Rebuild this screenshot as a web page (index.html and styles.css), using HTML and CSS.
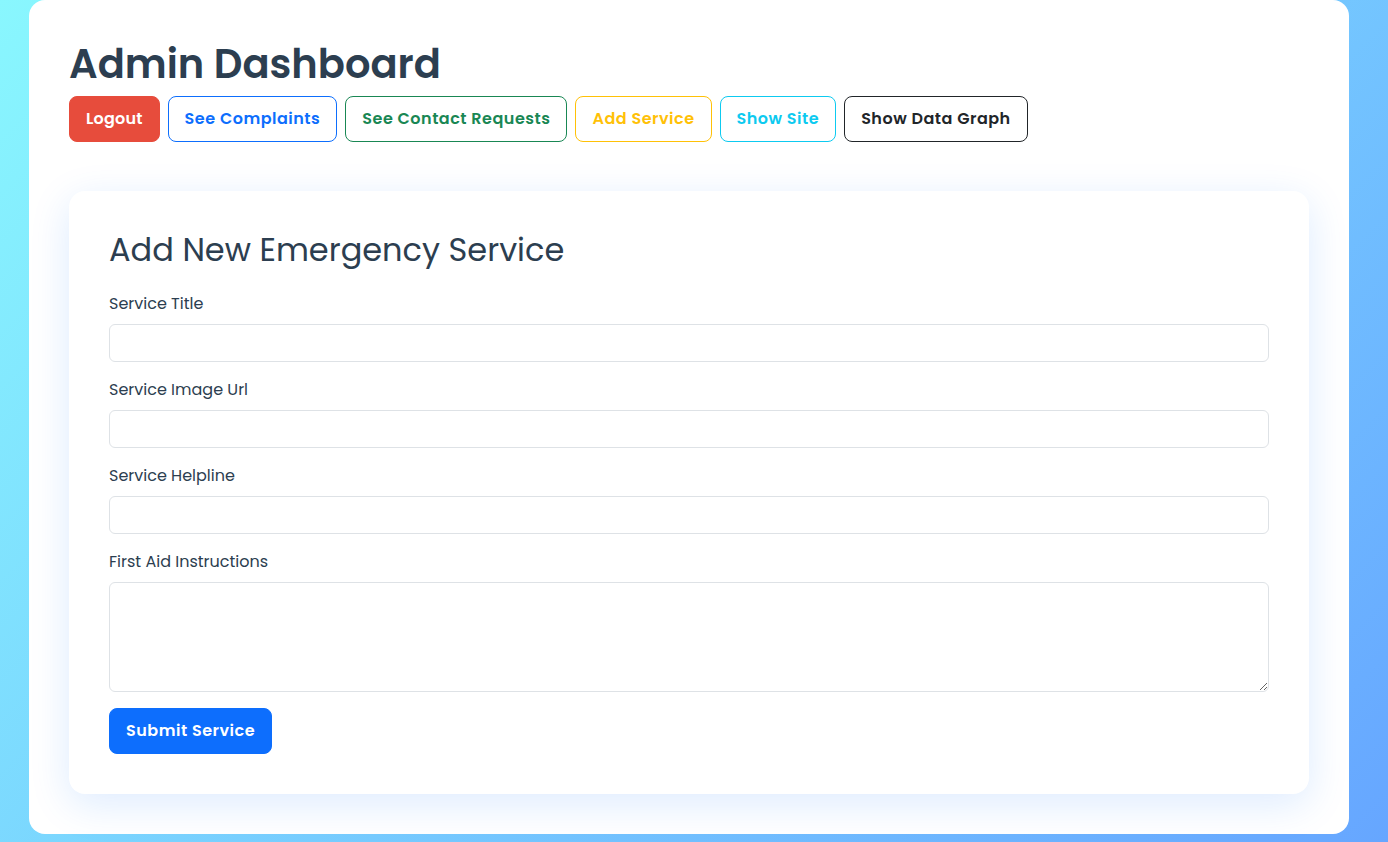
FILE: index.html
```html
<!DOCTYPE html>
<html lang="en">
<head>
<meta charset="utf-8">
<title>Admin Dashboard</title>
<link rel="stylesheet" href="styles.css">
</head>
<body>
<div class="page">
  <h1 class="title">Admin Dashboard</h1>
  <div class="actions">
    <button class="btn btn-red">Logout</button>
    <button class="btn btn-outline-blue">See Complaints</button>
    <button class="btn btn-outline-green">See Contact Requests</button>
    <button class="btn btn-outline-yellow">Add Service</button>
    <button class="btn btn-outline-cyan">Show Site</button>
    <button class="btn btn-outline-dark">Show Data Graph</button>
  </div>
  <div class="card">
    <h2 class="card-title">Add New Emergency Service</h2>
    <form class="form">
      <div class="field">
        <label class="label">Service Title</label>
        <input class="input" type="text">
      </div>
      <div class="field">
        <label class="label">Service Image Url</label>
        <input class="input" type="text">
      </div>
      <div class="field">
        <label class="label">Service Helpline</label>
        <input class="input" type="text">
      </div>
      <div class="field">
        <label class="label">First Aid Instructions</label>
        <textarea class="input textarea"></textarea>
      </div>
      <button type="button" class="btn btn-blue">Submit Service</button>
    </form>
  </div>
</div>
</body>
</html>
```

FILE: styles.css
```css
* { box-sizing: border-box; }
html, body { height: 100%; }
body {
  margin: 0;
  font-family: "Poppins", "Inter", "Noto Sans", sans-serif;
  color: #2c3e50;
  background: linear-gradient(135deg, #89f7fe 0%, #66a6ff 100%);
  overflow: hidden;
}
.page {
  width: 1320px;
  margin-left: 29px;
  background: #fff;
  border-radius: 16px;
  padding: 40px;
}
.title {
  margin: 0 0 8px;
  font-size: 40px;
  line-height: 48px;
  font-weight: 600;
  color: #2c3e50;
}
.actions {
  display: flex;
  gap: 8px;
  margin-bottom: 49px;
}
.btn {
  font-family: inherit;
  font-size: 16px;
  font-weight: 600;
  letter-spacing: 0.5px;
  line-height: 24px;
  padding: 10px 16px;
  border-radius: 8px;
  border: 1px solid transparent;
  background: #fff;
  cursor: pointer;
}
.btn-red { background: #e74c3c; border-color: #e74c3c; color: #fff; letter-spacing: 0.2px; }
.btn-blue { background: #0d6efd; border-color: #0d6efd; color: #fff; }
.btn-outline-blue { border-color: #0d6efd; color: #0d6efd; }
.btn-outline-green { border-color: #198754; color: #198754; }
.btn-outline-yellow { border-color: #ffc107; color: #ffc107; }
.btn-outline-cyan { border-color: #0dcaf0; color: #0dcaf0; }
.btn-outline-dark { border-color: #212529; color: #212529; }
.card {
  background: #fff;
  border-radius: 16px;
  padding: 40px;
  box-shadow: 0 10px 40px rgba(13, 110, 253, 0.14);
}
.card-title {
  margin: 0 0 23px;
  font-size: 32px;
  line-height: 38px;
  font-weight: 400;
  color: #2c3e50;
}
.field { margin-bottom: 16px; }
.label {
  display: block;
  font-size: 16px;
  line-height: 24px;
  margin-bottom: 8px;
  color: #2c3e50;
}
.input {
  display: block;
  width: 100%;
  height: 38px;
  border: 1px solid #dee2e6;
  border-radius: 6px;
  font-family: inherit;
  font-size: 16px;
  padding: 6px 12px;
  background: #fff;
}
.textarea { height: 110px; }
```
